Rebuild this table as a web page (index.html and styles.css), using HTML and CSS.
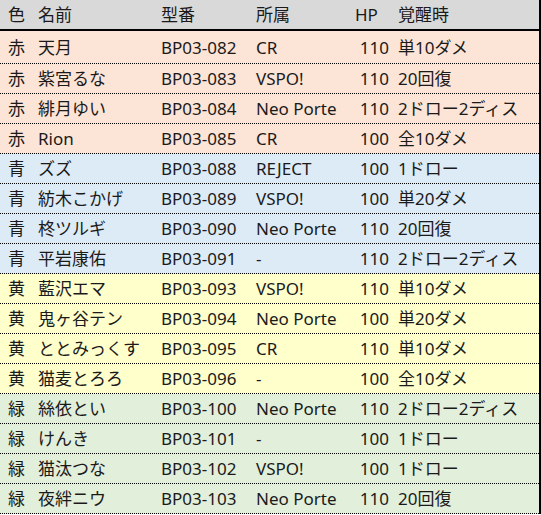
FILE: index.html
```html
<!DOCTYPE html>
<html lang="ja">
<head>
<meta charset="utf-8">
<link rel="stylesheet" href="styles.css">
</head>
<body>
<div class="sheet">
  <div class="row head"><span class="c1">色</span><span class="c2">名前</span><span class="c3">型番</span><span class="c4">所属</span><span class="c5 hp-head">HP</span><span class="c6">覚醒時</span></div>
  <div class="row red first"><span class="c1">赤</span><span class="c2">天月</span><span class="c3">BP03-082</span><span class="c4">CR</span><span class="c5">110</span><span class="c6">単10ダメ</span></div>
  <div class="row red"><span class="c1">赤</span><span class="c2">紫宮るな</span><span class="c3">BP03-083</span><span class="c4">VSPO!</span><span class="c5">110</span><span class="c6">20回復</span></div>
  <div class="row red"><span class="c1">赤</span><span class="c2">緋月ゆい</span><span class="c3">BP03-084</span><span class="c4">Neo Porte</span><span class="c5">110</span><span class="c6">2ドロー2ディス</span></div>
  <div class="row red"><span class="c1">赤</span><span class="c2">Rion</span><span class="c3">BP03-085</span><span class="c4">CR</span><span class="c5">100</span><span class="c6">全10ダメ</span></div>
  <div class="row blue"><span class="c1">青</span><span class="c2">ズズ</span><span class="c3">BP03-088</span><span class="c4">REJECT</span><span class="c5">100</span><span class="c6">1ドロー</span></div>
  <div class="row blue"><span class="c1">青</span><span class="c2">紡木こかげ</span><span class="c3">BP03-089</span><span class="c4">VSPO!</span><span class="c5">100</span><span class="c6">単20ダメ</span></div>
  <div class="row blue"><span class="c1">青</span><span class="c2">柊ツルギ</span><span class="c3">BP03-090</span><span class="c4">Neo Porte</span><span class="c5">110</span><span class="c6">20回復</span></div>
  <div class="row blue"><span class="c1">青</span><span class="c2">平岩康佑</span><span class="c3">BP03-091</span><span class="c4">-</span><span class="c5">110</span><span class="c6">2ドロー2ディス</span></div>
  <div class="row yellow"><span class="c1">黄</span><span class="c2">藍沢エマ</span><span class="c3">BP03-093</span><span class="c4">VSPO!</span><span class="c5">110</span><span class="c6">単10ダメ</span></div>
  <div class="row yellow"><span class="c1">黄</span><span class="c2">鬼ヶ谷テン</span><span class="c3">BP03-094</span><span class="c4">Neo Porte</span><span class="c5">100</span><span class="c6">単20ダメ</span></div>
  <div class="row yellow"><span class="c1">黄</span><span class="c2">ととみっくす</span><span class="c3">BP03-095</span><span class="c4">CR</span><span class="c5">110</span><span class="c6">単10ダメ</span></div>
  <div class="row yellow"><span class="c1">黄</span><span class="c2">猫麦とろろ</span><span class="c3">BP03-096</span><span class="c4">-</span><span class="c5">100</span><span class="c6">全10ダメ</span></div>
  <div class="row green"><span class="c1">緑</span><span class="c2">絲依とい</span><span class="c3">BP03-100</span><span class="c4">Neo Porte</span><span class="c5">110</span><span class="c6">2ドロー2ディス</span></div>
  <div class="row green"><span class="c1">緑</span><span class="c2">けんき</span><span class="c3">BP03-101</span><span class="c4">-</span><span class="c5">100</span><span class="c6">1ドロー</span></div>
  <div class="row green"><span class="c1">緑</span><span class="c2">猫汰つな</span><span class="c3">BP03-102</span><span class="c4">VSPO!</span><span class="c5">100</span><span class="c6">1ドロー</span></div>
  <div class="row green"><span class="c1">緑</span><span class="c2">夜絆ニウ</span><span class="c3">BP03-103</span><span class="c4">Neo Porte</span><span class="c5">110</span><span class="c6">20回復</span></div>
</div>
</body>
</html>
```
FILE: styles.css
```css
html, body {
  margin: 0;
  padding: 0;
  background: #ffffff;
}

.sheet {
  width: 539px;
  border-right: 2px solid #000;
  font-family: "Noto Sans", "Noto Sans CJK JP", sans-serif;
  font-size: 17px;
  color: #1a1a1a;
}

.row {
  display: grid;
  grid-template-columns: 30px 123px 95px 100px 43px 1fr;
  align-items: center;
  height: 29px;
  border-bottom: 1px dotted #000;
  white-space: nowrap;
}

.row span {
  padding-left: 8px;
  line-height: 1;
}

.row .c5 {
  text-align: right;
  padding-left: 0;
  padding-right: 2px;
}

.row .c5.hp-head {
  text-align: left;
  padding-left: 7px;
}

.row .c6 {
  padding-left: 7px;
}

.head {
  background: #d9d9d9;
  height: 29px;
  border-bottom: 2px solid #000;
}

.first {
  height: 32px;
}

.red { background: #fce4d6; }
.blue { background: #ddebf7; }
.yellow { background: #ffffcc; }
.green { background: #e2efda; }
```
